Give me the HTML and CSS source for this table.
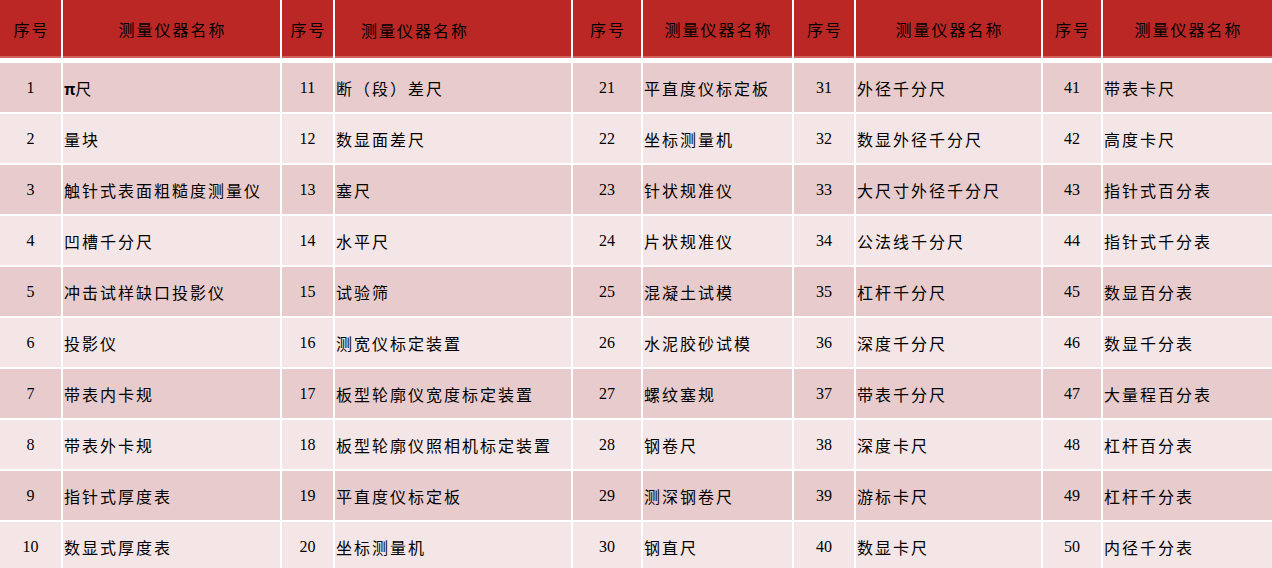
FILE: index.html
```html
<!DOCTYPE html>
<html lang="zh-CN">
<head>
<meta charset="utf-8">
<title>测量仪器名称</title>
<link rel="stylesheet" href="styles.css">
</head>
<body>
<div class="sheet">
  <div class="row head">
    <div class="cell num">序号</div><div class="cell name c">测量仪器名称</div>
    <div class="cell num">序号</div><div class="cell name l">测量仪器名称</div>
    <div class="cell num">序号</div><div class="cell name c">测量仪器名称</div>
    <div class="cell num">序号</div><div class="cell name c">测量仪器名称</div>
    <div class="cell num">序号</div><div class="cell name c">测量仪器名称</div>
  </div>
  <div class="row odd"><div class="cell num">1</div><div class="cell name"><span class="pi">π</span>尺</div><div class="cell num">11</div><div class="cell name">断（段）差尺</div><div class="cell num">21</div><div class="cell name">平直度仪标定板</div><div class="cell num">31</div><div class="cell name">外径千分尺</div><div class="cell num">41</div><div class="cell name">带表卡尺</div></div>
  <div class="row even"><div class="cell num">2</div><div class="cell name">量块</div><div class="cell num">12</div><div class="cell name">数显面差尺</div><div class="cell num">22</div><div class="cell name">坐标测量机</div><div class="cell num">32</div><div class="cell name">数显外径千分尺</div><div class="cell num">42</div><div class="cell name">高度卡尺</div></div>
  <div class="row odd"><div class="cell num">3</div><div class="cell name">触针式表面粗糙度测量仪</div><div class="cell num">13</div><div class="cell name">塞尺</div><div class="cell num">23</div><div class="cell name">针状规准仪</div><div class="cell num">33</div><div class="cell name">大尺寸外径千分尺</div><div class="cell num">43</div><div class="cell name">指针式百分表</div></div>
  <div class="row even"><div class="cell num">4</div><div class="cell name">凹槽千分尺</div><div class="cell num">14</div><div class="cell name">水平尺</div><div class="cell num">24</div><div class="cell name">片状规准仪</div><div class="cell num">34</div><div class="cell name">公法线千分尺</div><div class="cell num">44</div><div class="cell name">指针式千分表</div></div>
  <div class="row odd"><div class="cell num">5</div><div class="cell name">冲击试样缺口投影仪</div><div class="cell num">15</div><div class="cell name">试验筛</div><div class="cell num">25</div><div class="cell name">混凝土试模</div><div class="cell num">35</div><div class="cell name">杠杆千分尺</div><div class="cell num">45</div><div class="cell name">数显百分表</div></div>
  <div class="row even"><div class="cell num">6</div><div class="cell name">投影仪</div><div class="cell num">16</div><div class="cell name">测宽仪标定装置</div><div class="cell num">26</div><div class="cell name">水泥胶砂试模</div><div class="cell num">36</div><div class="cell name">深度千分尺</div><div class="cell num">46</div><div class="cell name">数显千分表</div></div>
  <div class="row odd"><div class="cell num">7</div><div class="cell name">带表内卡规</div><div class="cell num">17</div><div class="cell name">板型轮廓仪宽度标定装置</div><div class="cell num">27</div><div class="cell name">螺纹塞规</div><div class="cell num">37</div><div class="cell name">带表千分尺</div><div class="cell num">47</div><div class="cell name">大量程百分表</div></div>
  <div class="row even"><div class="cell num">8</div><div class="cell name">带表外卡规</div><div class="cell num">18</div><div class="cell name">板型轮廓仪照相机标定装置</div><div class="cell num">28</div><div class="cell name">钢卷尺</div><div class="cell num">38</div><div class="cell name">深度卡尺</div><div class="cell num">48</div><div class="cell name">杠杆百分表</div></div>
  <div class="row odd"><div class="cell num">9</div><div class="cell name">指针式厚度表</div><div class="cell num">19</div><div class="cell name">平直度仪标定板</div><div class="cell num">29</div><div class="cell name">测深钢卷尺</div><div class="cell num">39</div><div class="cell name">游标卡尺</div><div class="cell num">49</div><div class="cell name">杠杆千分表</div></div>
  <div class="row even"><div class="cell num">10</div><div class="cell name">数显式厚度表</div><div class="cell num">20</div><div class="cell name">坐标测量机</div><div class="cell num">30</div><div class="cell name">钢直尺</div><div class="cell num">40</div><div class="cell name">数显卡尺</div><div class="cell num">50</div><div class="cell name">内径千分表</div></div>
</div>
</body>
</html>
```

FILE: styles.css
```css
html, body {
  margin: 0;
  padding: 0;
  background: #ffffff;
}

.sheet {
  width: 1272px;
  height: 568px;
  overflow: hidden;
  background: #ffffff;
  font-family: "Liberation Serif", "Noto Sans CJK SC", serif;
  font-size: 16px;
  color: #000000;
}

.row {
  display: grid;
  grid-template-columns: 61px 217px 51px 236px 68px 149px 60px 185px 58px 169px;
  column-gap: 2px;
  height: 49px;
  margin-bottom: 2px;
}

.head {
  height: 58px;
  margin-bottom: 5px;
}

.cell {
  display: flex;
  align-items: center;
  white-space: nowrap;
  overflow: hidden;
}

.head .cell {
  background: #bb2724;
  box-shadow: inset 0 -2px 0 #d2615e;
  justify-content: center;
  letter-spacing: 2px;
  padding-left: 2px;
}

.head .cell.l {
  justify-content: flex-start;
  padding-left: 26px;
  padding-top: 2px;
}

.odd .cell {
  background: #e8cccd;
}

.even .cell {
  background: #f4e6e7;
}

.num {
  justify-content: center;
}

.name {
  justify-content: flex-start;
  padding-left: 1px;
  letter-spacing: 2px;
}

.pi {
  font-family: "Noto Sans CJK SC", sans-serif;
  font-weight: 700;
  letter-spacing: 0;
}
```
